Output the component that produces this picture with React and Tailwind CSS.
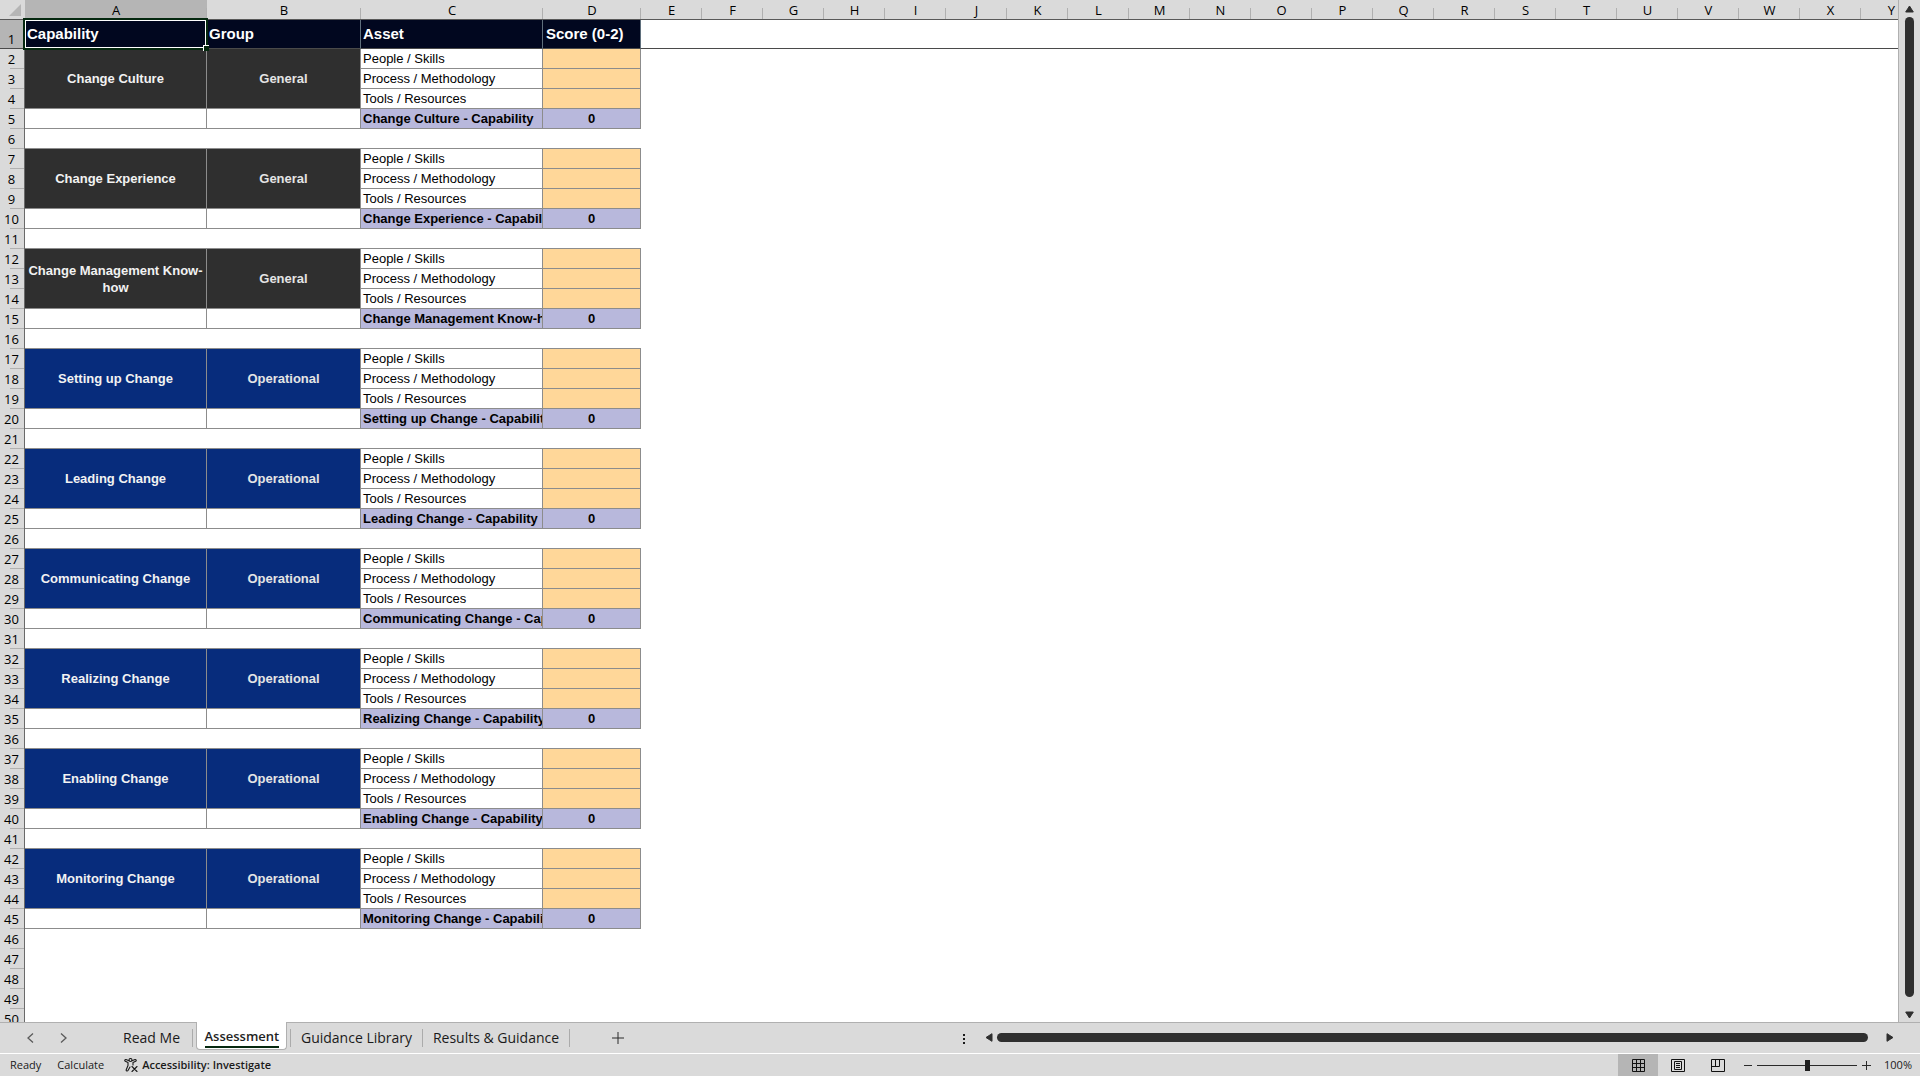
import React from "react";

const GENERAL = "bg-[#2f2f2f]";
const OPERATIONAL = "bg-[#072c7c]";

const capabilities = [
  { name: "Change Culture", group: "General", tone: GENERAL },
  { name: "Change Experience", group: "General", tone: GENERAL },
  { name: "Change Management Know-how", group: "General", tone: GENERAL },
  { name: "Setting up Change", group: "Operational", tone: OPERATIONAL },
  { name: "Leading Change", group: "Operational", tone: OPERATIONAL },
  { name: "Communicating Change", group: "Operational", tone: OPERATIONAL },
  { name: "Realizing Change", group: "Operational", tone: OPERATIONAL },
  { name: "Enabling Change", group: "Operational", tone: OPERATIONAL },
  { name: "Monitoring Change", group: "Operational", tone: OPERATIONAL },
];

const assets = ["People / Skills", "Process / Methodology", "Tools / Resources"];
const columns = "ABCDEFGHIJKLMNOPQRSTUVWXY".split("");
const columnWidth = { A: "w-[182px]", B: "w-[154px]", C: "w-[182px]", D: "w-[98px]" };
const line = "border-r border-b border-[#8c8c8c]";

function RowNumber({ n, active }) {
  return (
    <th
      scope="row"
      className={
        active
          ? "border-r border-b border-r-[#595959] border-b-[#4a4a4a] bg-[#b5b5b5] p-0 align-bottom font-normal"
          : "border-r border-[#6a6a6a] bg-[#dadada] p-0 align-bottom font-normal"
      }
    >
      <div
        className={
          active
            ? "pr-px text-center font-[Open_Sans,sans-serif] text-[13px] leading-[18px]"
            : "ml-[10px] h-5 border-b border-[#b0b0b0]"
        }
      >
        {active ? n : <span className="-ml-[10px] block pr-px text-center font-[Open_Sans,sans-serif] text-[13px] leading-[21px]">{n}</span>}
      </div>
    </th>
  );
}

function CapabilityRows({ item, first }) {
  return (
    <>
      {assets.map((asset, i) => (
        <tr key={asset} className="h-5">
          <RowNumber n={first + i} />
          {i === 0 && (
            <>
              <td rowSpan={3} className={`${line} ${item.tone} p-0 text-center text-[13px] leading-[17px] font-bold text-[#f2f2f2]`}>
                {item.name}
              </td>
              <td rowSpan={3} className={`${line} ${item.tone} p-0 text-center text-[13px] leading-[17px] font-bold text-[#e4e4e4]`}>
                {item.group}
              </td>
            </>
          )}
          <td className={`${line} bg-white py-0 pr-0 pl-0.5 text-[13px] leading-[18px] whitespace-nowrap text-black`}>{asset}</td>
          <td className={`${line} bg-[#ffd799] p-0`} />
        </tr>
      ))}
      <tr className="h-5">
        <RowNumber n={first + 3} />
        <td className={`${line} p-0`} />
        <td className={`${line} p-0`} />
        <td className={`${line} overflow-hidden bg-[#b8b8dc] py-0 pr-0 pl-0.5 text-[13px] leading-[18px] font-bold whitespace-nowrap`}>
          {item.name} - Capability
        </td>
        <td className={`${line} bg-[#b8b8dc] p-0 text-center text-[13px] leading-[18px] font-bold`}>0</td>
      </tr>
    </>
  );
}

function SpacerRow({ n, ruled }) {
  return (
    <tr className="h-5">
      <RowNumber n={n} />
      <td colSpan={4} className={ruled ? "border-b border-[#8c8c8c] p-0" : "p-0"} />
    </tr>
  );
}

function Sheet() {
  const head = "border-r border-b border-r-[#5f6f7c] border-b-[#4a4a4a] bg-[#01071f] py-0 pr-0 pl-0.5 text-left text-[15px] leading-[28px] font-bold text-white";
  return (
    <table className="w-px table-fixed border-separate border-spacing-0 font-[Liberation_Sans,sans-serif]">
      <colgroup>
        <col className="w-[25px]" />
        {columns.map((c) => (
          <col key={c} className={columnWidth[c] || "w-[61px]"} />
        ))}
      </colgroup>
      <thead>
        <tr className="h-5 font-[Open_Sans,sans-serif] text-[13px] leading-[19px]">
          <td className="border-b border-[#595959] bg-[#dadada] p-0">
            <svg className="ml-[9px] block" width="12" height="12" viewBox="0 0 12 12">
              <path d="M12 0V12H0Z" fill="#b5b5b5" />
            </svg>
          </td>
          {columns.map((c) => (
            <th key={c} scope="col" className={`border-b border-[#595959] p-0 font-normal ${c === "A" ? "bg-[#b5b5b5]" : "bg-[#dadada]"}`}>
              <div className="flex h-[19px] items-end">
                <span className="min-w-0 flex-1 pl-px text-center leading-[18px]">{c}</span>
                <span className="h-[11px] w-px bg-[#b0b0b0]" />
              </div>
            </th>
          ))}
        </tr>
      </thead>
      <tbody>
        <tr className="h-[29px]">
          <RowNumber n={1} active />
          <td className={`${head} relative`}>
            Capability
            <span className="absolute -top-0.5 -right-0.5 -bottom-0.5 -left-0.5 border-2 border-[#05280f]">
              <span className="block h-full border border-white" />
              <span className="absolute -right-[3px] -bottom-[3px] size-[6px] border-t border-l border-white bg-[#05280f]" />
            </span>
          </td>
          <td className={head}>Group</td>
          <td className={head}>Asset</td>
          <td className={`${head} pl-[3px]`}>Score (0-2)</td>
          <td colSpan={21} className="border-b border-[#4a4a4a] p-0" />
        </tr>
        {capabilities.map((item, i) => (
          <React.Fragment key={item.name}>
            <CapabilityRows item={item} first={2 + i * 5} />
            <SpacerRow n={6 + i * 5} ruled={i < capabilities.length - 1} />
          </React.Fragment>
        ))}
        {[47, 48, 49, 50].map((n) => (
          <SpacerRow key={n} n={n} />
        ))}
      </tbody>
    </table>
  );
}

function Arrow({ d, w, h, label }) {
  return (
    <button aria-label={label} className="block shrink-0">
      <svg className="block" width={w} height={h} viewBox={`0 0 ${w} ${h}`}>
        <path d={d} fill="#2f2f2f" stroke="#2f2f2f" strokeLinejoin="round" />
      </svg>
    </button>
  );
}

function TabBar() {
  const divider = "mt-1.5 h-[18px] w-px shrink-0 bg-[#ababab]";
  return (
    <nav className="flex h-8 shrink-0 items-start border-b border-white bg-[#dadada] text-sm text-[#1a1a1a]">
      <div className="flex h-[31px] w-[196px] items-start border-t border-[#b0b0b0]">
        <button aria-label="Previous sheet" className="mt-[10px] ml-[27px]">
          <svg className="block" width="7" height="10" viewBox="0 0 7 10" fill="none" stroke="#5a5a5a" strokeWidth="1.3">
            <path d="M6 .5 1 5l5 4.500" />
          </svg>
        </button>
        <button aria-label="Next sheet" className="mt-[10px] ml-[26px]">
          <svg className="block" width="7" height="10" viewBox="0 0 7 10" fill="none" stroke="#5a5a5a" strokeWidth="1.3">
            <path d="M1 .5 6 5 1 9.500" />
          </svg>
        </button>
        <button className="mt-[3px] ml-auto pr-3 leading-[24px] whitespace-nowrap">Read Me</button>
        <span className={`${divider} mr-[3px]`} />
      </div>
      <button aria-current="page" className="h-7 w-[91px] shrink-0 rounded-b-[4px] border-r border-b border-l border-[#b0b0b0] bg-white pt-[3px] text-[13px] font-semibold text-[#1f1f1f]">
        <span className="mx-auto block w-[74px] border-b-2 border-[#05280f] leading-[20px]">Assessment</span>
      </button>
      <div className="flex h-[31px] min-w-0 flex-1 items-start border-t border-[#b0b0b0]">
        <span className={`${divider} ml-[3px]`} />
        <button className="mt-[3px] w-[131px] shrink-0 text-center leading-[24px] whitespace-nowrap">Guidance Library</button>
        <span className={divider} />
        <button className="mt-[3px] w-[146px] shrink-0 text-center leading-[24px] whitespace-nowrap">Results &amp; Guidance</button>
        <span className={divider} />
        <button aria-label="New sheet" className="mt-[9px] ml-[42px]">
          <svg className="block" width="12" height="12" viewBox="0 0 12 12" stroke="#2a2a2a">
            <path d="M6 0V12M0 6H12" />
          </svg>
        </button>
      </div>
      <div className="flex h-[31px] w-[957px] shrink items-start border-t border-[#b0b0b0]">
        <svg className="mt-[11px] mr-[19px] shrink-0" width="3" height="10" viewBox="0 0 3 10" fill="#1a1a1a">
          <path d="M0 0h2v2H0zM0 4h2v2H0zM0 8h2v2H0z" />
        </svg>
        <div className="mt-[10px] flex min-w-0 flex-1 items-center">
          <Arrow label="Scroll left" w={8} h={9} d="M7 .7V8.300L1 4.500Z" />
          <span className="mr-[18px] ml-1 h-[9px] min-w-0 flex-1 rounded-full bg-[#2f2f2f]" />
          <Arrow label="Scroll right" w={8} h={9} d="M1 .7V8.300L7 4.500Z" />
          <span className="w-[26px]" />
        </div>
      </div>
    </nav>
  );
}

function StatusBar() {
  return (
    <footer className="flex h-[22px] shrink-0 items-center bg-[#dadada] text-[11px] text-[#1a1a1a]">
      <span className="ml-[10px]">Ready</span>
      <span className="ml-4">Calculate</span>
      <button className="ml-5 flex items-center gap-1 font-semibold whitespace-nowrap">
        <svg width="14" height="14" viewBox="0 0 14 14" fill="none" stroke="#1a1a1a" strokeWidth="1.100" strokeLinecap="round" strokeLinejoin="round">
          <circle cx="6.500" cy="2" r="1.500" />
          <path d="M5 2.800 2 1.600C.8 1.300.3 2.700 1.300 3.200L4 4.500v3L2.200 11.800c-.3 1.200 1.200 1.700 1.800.7L6 9M8 2.800l3-1.200c1.200-.3 1.700 1.100.7 1.600L9 4.500V7M8 8.500l5 5M13 8.500l-5 5" />
        </svg>
        Accessibility: Investigate
      </button>
      <div className="ml-auto flex h-full items-center">
        <button aria-label="Normal view" className="flex h-full w-10 items-center justify-center bg-[#b5b5b5]">
          <svg width="13" height="13" viewBox="0 0 13 13" fill="none" stroke="#111">
            <path d="M.5.5h12v12H.5zM4.500.5v12M8.500.5v12M.5 4.500h12M.5 8.500h12" />
          </svg>
        </button>
        <button aria-label="Page layout view" className="flex h-full w-10 items-center justify-center">
          <svg width="14" height="13" viewBox="0 0 14 13" fill="none" stroke="#111">
            <path d="M.5.5h13v12H.5zM3.500 2.500h7v8h-7zM5 4.500h4M5 6.500h4M5 8.500h4" />
          </svg>
        </button>
        <button aria-label="Page break preview" className="flex h-full w-10 items-center justify-center">
          <svg width="14" height="13" viewBox="0 0 14 13" fill="none" stroke="#111">
            <path d="M.5.5h13v12H.5zM.5 7.500h8V.5M4.500.5v7" />
          </svg>
        </button>
        <button aria-label="Zoom out" className="ml-[6px]">
          <svg className="block" width="8" height="9" viewBox="0 0 8 9" stroke="#2a2a2a"><path d="M0 4.500H8" /></svg>
        </button>
        <input
          type="range"
          aria-label="Zoom"
          defaultValue="50"
          className="mx-[5px] h-[11px] w-[100px] appearance-none bg-transparent bg-[linear-gradient(#2a2a2a,#2a2a2a)] bg-[length:100%_1px] bg-center bg-no-repeat [&::-webkit-slider-thumb]:h-[11px] [&::-webkit-slider-thumb]:w-[5px] [&::-webkit-slider-thumb]:appearance-none [&::-webkit-slider-thumb]:bg-[#1f1f1f]"
        />
        <button aria-label="Zoom in">
          <svg className="block" width="9" height="9" viewBox="0 0 9 9" stroke="#2a2a2a"><path d="M0 4.500H9M4.500 0V9" /></svg>
        </button>
        <span className="mr-2 ml-[13px]">100%</span>
      </div>
    </footer>
  );
}

export default function App() {
  return (
    <div className="flex h-screen flex-col overflow-hidden bg-[#dadada] font-[Open_Sans,sans-serif] text-black">
      <div className="flex min-h-0 flex-1">
        <main className="min-w-0 flex-1 overflow-hidden bg-white">
          <Sheet />
        </main>
        <div className="flex w-[22px] shrink-0 flex-col items-center border-l border-[#b0b0b0] pt-[5px] pb-[3px]">
          <Arrow label="Scroll up" w={9} h={8} d="M.7 7H8.300L4.500 1Z" />
          <span className="mt-1 mb-[14px] min-h-0 w-[9px] flex-1 rounded-full bg-[#2f2f2f]" />
          <Arrow label="Scroll down" w={9} h={8} d="M.7 1H8.300L4.500 7Z" />
        </div>
      </div>
      <TabBar />
      <StatusBar />
    </div>
  );
}
